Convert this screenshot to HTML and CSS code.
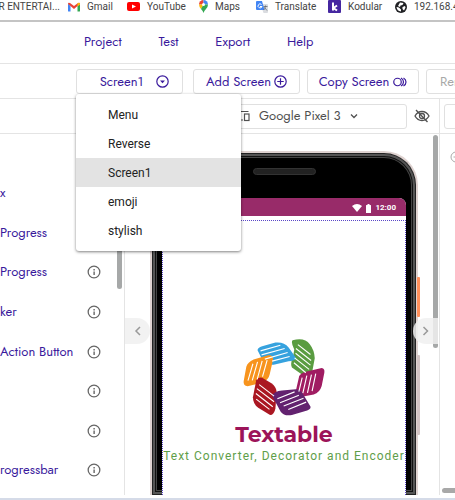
FILE: index.html
```html
<!DOCTYPE html>
<html lang="en">
<head>
    <meta charset="UTF-8">
    <meta name="viewport" content="width=device-width, initial-scale=1.0">
    <title>Kodular Creator</title>
    <link rel="stylesheet" href="styles.css">
</head>
<body>
    <!-- Shared symbols -->
    <svg class="defs" aria-hidden="true">
        <symbol id="info" viewBox="0 0 24 24">
            <circle cx="12" cy="12" r="10" fill="none" stroke="currentColor" stroke-width="2.2"/>
            <path d="M11 11h2.4v6H11zM11 7h2.4v2.4H11z" fill="currentColor"/>
        </symbol>
    </svg>

    <nav class="bookmarks" aria-label="Bookmarks">
        <a href="#">R ENTERTAI...</a>
        <a href="#">
            <svg width="12" height="10" viewBox="0 0 24 20"><path d="M0 3v15q0 1 1.500 1H5V8z" fill="#4285f4"/><path d="M24 3v15q0 1-1.500 1H19V8z" fill="#34a853"/><path d="M0 4Q0 0 4 2l8 6 8-6q4-2 4 2l-5 4-7 6-7-6z" fill="#ea4335"/><path d="M19 3l1-1q4-2 4 3l-5 4z" fill="#fbbc04"/></svg>
            Gmail
        </a>
        <a href="#">
            <svg width="13" height="9" viewBox="0 0 26 18"><rect width="26" height="18" rx="4" fill="#f00"/><path d="M10 5l8 4-8 4z" fill="#fff"/></svg>
            YouTube
        </a>
        <a href="#">
            <svg width="9" height="13" viewBox="0 0 18 26"><path d="M9 0a9 9 0 0 0-9 9h9z" fill="#ea4335"/><path d="M9 0a9 9 0 0 1 9 9H9z" fill="#4285f4"/><path d="M0 9h9l-5 9Q0 13 0 9z" fill="#fbbc04"/><path d="M18 9q0 5-4 9-4 4-5 8-1-4-5-8l5-9z" fill="#34a853"/><circle cx="9" cy="9" r="3" fill="#fff"/></svg>
            Maps
        </a>
        <a href="#">
            <svg width="12" height="12" viewBox="0 0 24 24"><path d="M9 6h13q2 0 2 2v14q0 2-2 2h-7z" fill="#dadce0"/><path d="M2 0h10l5 18H2q-2 0-2-2V2q0-2 2-2z" fill="#4285f4"/><path d="M11 7a4 4 0 1 0 1 4H8" fill="none" stroke="#fff" stroke-width="2"/><path d="M15 11h8M19 9v2q-1 5-4 7M17 13l5 6" fill="none" stroke="#5f6368" stroke-width="1.500"/></svg>
            Translate
        </a>
        <a href="#">
            <svg width="13" height="13" viewBox="0 0 26 26"><rect width="26" height="26" rx="2" fill="#4527a0"/><path d="M10 5v16M18 11l-7 5 7 5" fill="none" stroke="#fff" stroke-width="4"/></svg>
            Kodular
        </a>
        <a href="#">
            <svg width="12" height="12" viewBox="0 0 24 24"><circle cx="12" cy="12" r="12" fill="#202124"/><path d="M3 12q4 0 6 2t3 3v4q-8-1-9-9zM10 3l7 1-2 4-4 1-1 3-4-2zM15 12l5-2 1 3-3 6-3-3z" fill="#fff"/></svg>
            192.168.4
        </a>
    </nav>

    <nav class="main-nav" aria-label="Main">
        <a href="#">Project</a>
        <a href="#">Test</a>
        <a href="#">Export</a>
        <a href="#">Help</a>
    </nav>

    <div class="toolbar">
        <div class="screen-picker">
            <button type="button" class="btn" aria-haspopup="true" aria-expanded="true">
                Screen1
                <svg width="13" height="13" viewBox="0 0 24 24"><circle cx="12" cy="12" r="10.500" fill="none" stroke="currentColor" stroke-width="2.2"/><path d="M7.500 10h9L12 15z" fill="currentColor"/></svg>
            </button>
            <ul class="screen-menu">
                <li><button type="button">Menu</button></li>
                <li><button type="button">Reverse</button></li>
                <li><button type="button" class="active">Screen1</button></li>
                <li><button type="button">emoji</button></li>
                <li><button type="button">stylish</button></li>
            </ul>
        </div>
        <button type="button" class="btn add">
            Add Screen
            <svg width="13" height="13" viewBox="0 0 24 24" fill="none" stroke="currentColor" stroke-width="2.2"><circle cx="12" cy="12" r="10.500"/><path d="M12 6v12M6 12h12"/></svg>
        </button>
        <button type="button" class="btn copy">
            Copy Screen
            <svg width="14" height="12" viewBox="0 0 28 24" fill="none" stroke="currentColor" stroke-width="2.4"><circle cx="9" cy="12" r="7.500"/><path d="M16 4q5 3 5 8t-5 8M21 4q5 3 5 8t-5 8"/></svg>
        </button>
        <button type="button" class="btn remove" disabled>Remove</button>
    </div>

    <main class="designer">
        <aside class="palette">
            <div class="panel-head"></div>
            <ul class="components">
                <li></li>
                <li class="cut"><a href="#">ox</a></li>
                <li><a href="#">Progress</a></li>
                <li><a href="#">Progress</a><svg><use href="#info"/></svg></li>
                <li><a href="#">ker</a><svg><use href="#info"/></svg></li>
                <li><a href="#">Action Button</a><svg><use href="#info"/></svg></li>
                <li><svg><use href="#info"/></svg></li>
                <li><svg><use href="#info"/></svg></li>
                <li><a href="#">rogressbar</a><svg><use href="#info"/></svg></li>
            </ul>
            <div class="thumb"></div>
        </aside>

        <section class="viewer">
            <div class="panel-head">
                <div class="device">
                    <svg width="15" height="12" viewBox="0 0 30 24" fill="none" stroke="currentColor" stroke-width="2.4"><path d="M27 3H5v15M1 20h15"/><rect x="19" y="8" width="9" height="13"/></svg>
                    <select aria-label="Device">
                        <option>Google Pixel 3</option>
                    </select>
                    <svg width="8" height="6" viewBox="0 0 16 12" fill="none" stroke="currentColor" stroke-width="2.600"><path d="M2 3l6 6 6-6"/></svg>
                </div>
                <button type="button" class="eye" aria-label="Show hidden components">
                    <svg width="16" height="14" viewBox="0 0 32 28" fill="none" stroke="currentColor" stroke-width="2.600"><path d="M2 14Q7 5 16 5t14 9q-5 9-14 9T2 14z"/><circle cx="16" cy="14" r="5"/><path d="M4 2l23 24"/></svg>
                </button>
            </div>
            <div class="workspace">
                <div class="phone">
                    <div class="speaker"></div>
                    <div class="screen">
                        <div class="status">
                            <svg width="10" height="8" viewBox="0 0 20 16"><path d="M0 4Q10-4 20 4L10 16z" fill="#fff"/></svg>
                            <svg width="5" height="9" viewBox="0 0 10 18"><path d="M3 0h4v2h2q1 0 1 1v14q0 1-1 1H1q-1 0-1-1V3q0-1 1-1h2z" fill="#fff"/></svg>
                            <span>12:00</span>
                        </div>
                        <div class="form">
                            <svg class="logo" width="82" height="78" viewBox="52 38 248 234">
                                <path d="M202 44Q238 34 254 56Q268 74 269 98L262 136Q256 156 240 154L200 126Q194 114 203 96L207 72Q196 50 202 44Z" fill="#5a9c41"/>
                                <path d="M96 74Q96 66 110 62L150 51Q176 48 190 66L213 98Q208 106 190 107L145 118Q120 120 112 106Z" fill="#36a2de"/>
                                <path d="M222 152Q228 142 245 138L290 128Q300 130 298 142L290 182Q284 202 266 208L222 216Q206 212 212 196Z" fill="#a01c62"/>
                                <path d="M62 124Q66 110 84 102L128 89Q144 88 143 102L133 146Q130 162 112 172L66 183Q52 182 54 168Z" fill="#f7941e"/>
                                <path d="M92 165Q98 154 110 157L138 174Q152 184 154 200L150 250Q146 270 134 270L98 248Q82 236 82 216Z" fill="#aa1722"/>
                                <path d="M140 212Q146 198 170 196L212 192Q224 192 232 204L256 244Q258 252 246 256L200 270Q176 274 166 260Z" fill="#63226f"/>
                                <g fill="none" stroke="#fff" stroke-width="3.400">
                                    <path d="M105 76L165 59M108 88L178 69M118 101L187 81M140 107L193 93"/>
                                    <path d="M218 57L256 87M212 69L258 105M211 83L256 119M208 97L252 132M206 112L242 142"/>
                                    <path d="M231 157L221 199M245 151L233 204M259 148L247 203M272 145L261 198"/>
                                    <path d="M82 115L67 166M96 109L80 165M110 106L95 162M125 104L111 154"/>
                                    <path d="M101 178L146 213M94 190L146 230M91 205L142 245M92 222L132 253"/>
                                    <path d="M156 221L208 200M164 233L221 210M175 243L235 219M189 253L243 231"/>
                                </g>
                            </svg>
                            <h1>Textable</h1>
                            <p>Text Converter, Decorator and Encoder</p>
                        </div>
                    </div>
                    <i class="key power"></i>
                    <i class="key volume"></i>
                </div>
                <div class="thumb"></div>
                <button type="button" class="handle left" aria-label="Collapse palette"><svg width="7" height="10" viewBox="0 0 14 20"><path d="M12 2L4 10l8 8"/></svg></button>
                <button type="button" class="handle right" aria-label="Collapse components"><svg width="7" height="10" viewBox="0 0 14 20"><path d="M3 2l8 8-8 8"/></svg></button>
            </div>
        </section>

        <aside class="tree">
            <div class="panel-head"><div class="tree-box"></div></div>
            <svg class="collapse" width="12" height="12" viewBox="0 0 24 24" fill="none" stroke="currentColor" stroke-width="2"><circle cx="12" cy="12" r="10"/><path d="M7 12h10"/></svg>
            <div class="tree-scroll"></div>
        </aside>
    </main>
    <footer class="bottom"></footer>
</body>
</html>
```

FILE: styles.css
```css
* {
    margin: 0;
    padding: 0;
    box-sizing: border-box;
}

body {
    display: flex;
    flex-direction: column;
    height: 100vh;
    overflow: hidden;
    background: #fff;
    color: #3a1a9c;
    font-family: Jost, Lato, sans-serif;
    font-size: 13px;
    line-height: 18px;
}

a {
    color: inherit;
    text-decoration: none;
    white-space: nowrap;
}

ul {
    list-style: none;
}

button,
select {
    font: inherit;
    color: inherit;
    background: none;
    border: none;
    cursor: pointer;
}

svg {
    flex: none;
}

.defs {
    position: absolute;
    width: 0;
    height: 0;
}

/* Browser bookmarks */
.bookmarks {
    display: grid;
    grid-template-columns: 68px 59px 72px 57px 72px 67px 60px;
    height: 22px;
    padding-bottom: 10px;
    border-bottom: 2px solid #c4c4c4;
    color: #444;
    font-family: "Segoe UI", Roboto, sans-serif;
    font-size: 10px;
    line-height: 12px;
    overflow: hidden;
}

.bookmarks a {
    display: flex;
    align-items: center;
    gap: 7px;
}

.bookmarks a:first-child {
    justify-content: flex-end;
    padding-right: 8px;
}

/* Main menu */
.main-nav {
    display: flex;
    gap: 37px;
    height: 42px;
    padding: 11px 84px;
    border-bottom: 1px solid #e4e4e4;
}

/* Screen buttons */
.toolbar {
    display: flex;
    gap: 7px;
    height: 35px;
    padding: 5px 0 5px 76px;
    border-bottom: 1px solid #e4e4e4;
}

.btn {
    display: flex;
    flex: none;
    align-items: center;
    justify-content: center;
    gap: 4px;
    width: 107px;
    height: 25px;
    border: 1px solid #e0e0e0;
    border-radius: 3px;
    white-space: nowrap;
}

.screen-picker {
    position: relative;
    margin-right: 3px;
}

.screen-picker .btn {
    gap: 13px;
    padding-left: 10px;
}

.add {
    gap: 3px;
}

.copy {
    width: 112px;
}

.remove {
    justify-content: flex-start;
    padding-left: 13px;
    color: #a8a8a8;
}

.screen-menu {
    position: absolute;
    top: 25px;
    left: 0;
    z-index: 5;
    width: 165px;
    padding: 6px 0;
    background: #fff;
    border-radius: 3px;
    box-shadow: 0 1px 3px rgba(0, 0, 0, 0.5);
}

.screen-menu button {
    display: block;
    width: 100%;
    height: 29px;
    padding-left: 32px;
    color: #222;
    font-family: Roboto, sans-serif;
    font-size: 12px;
    text-align: left;
}

.screen-menu .active {
    background: #e3e3e3;
}

/* Designer */
.designer {
    display: flex;
    flex: 1;
    min-height: 0;
}

.panel-head {
    display: flex;
    flex: none;
    align-items: center;
    justify-content: flex-end;
    height: 35px;
    border-bottom: 1px solid #e4e4e4;
}

.palette {
    position: relative;
    display: flex;
    flex-direction: column;
    width: 125px;
    border-right: 1px solid #e4e4e4;
}

.components {
    display: flex;
    flex: 1;
    flex-direction: column;
    padding-bottom: 5px;
}

.components li {
    display: flex;
    flex: 1;
    align-items: center;
    padding-right: 23px;
}

.components .cut {
    text-indent: -7px;
}

.components svg {
    width: 14px;
    height: 14px;
    margin-left: auto;
    color: #666;
}

.thumb {
    position: absolute;
    width: 5px;
    background: #a6a8a8;
    border-radius: 3px;
}

.palette .thumb {
    top: 36px;
    right: 2px;
    height: 154px;
}

.viewer {
    display: flex;
    flex: 1;
    flex-direction: column;
    min-width: 0;
    border-right: 1px solid #e4e4e4;
}

.viewer .panel-head {
    gap: 7px;
    padding-right: 9px;
    color: #505050;
}

.device {
    display: flex;
    align-items: center;
    gap: 9px;
    width: 182px;
    height: 25px;
    padding-left: 9px;
    border: 1px solid #e0e0e0;
    border-radius: 3px;
}

.device select {
    appearance: none;
    outline: none;
}

.eye {
    display: flex;
}

.workspace {
    position: relative;
    flex: 1;
    min-height: 0;
    padding: 17px 21px 0 25px;
    overflow: hidden;
}

.phone {
    position: relative;
    display: flex;
    flex-direction: column;
    height: 100%;
    padding: 15px 10px 0;
    background: #000;
    border: 2px solid #dfd3d1;
    border-bottom: none;
    border-radius: 34px 34px 0 0;
    box-shadow: inset 0 0 0 1px #222, inset 0 0 0 3px #555, inset 0 0 0 4px #111, inset 0 0 0 5px #444;
}

.speaker {
    align-self: center;
    width: 63px;
    height: 7px;
    margin-bottom: 23px;
    background: #222;
    border: 1px solid #333;
    border-radius: 4px;
}

.screen {
    display: flex;
    flex: 1;
    flex-direction: column;
    min-height: 0;
    background: #fff;
    border-radius: 7px 7px 0 0;
    overflow: hidden;
}

.status {
    display: flex;
    flex: none;
    align-items: center;
    justify-content: flex-end;
    gap: 4px;
    height: 18px;
    margin-bottom: 4px;
    padding: 2px 10px 0 0;
    background: #982b69;
    color: #fff;
    font-family: Roboto, sans-serif;
    font-size: 8px;
    font-weight: bold;
}

.form {
    display: flex;
    flex: 1;
    flex-direction: column;
    align-items: center;
    padding-top: 117px;
    border: 1px dotted #5b48c8;
    border-bottom: none;
}

.logo {
    margin-bottom: 5px;
}

.form h1 {
    color: #9c1459;
    font-family: Montserrat, Inter, sans-serif;
    font-size: 22px;
    line-height: 28px;
}

.form p {
    color: #5f9e4a;
    font-family: Roboto, sans-serif;
    font-size: 12px;
    line-height: 14px;
    letter-spacing: 1px;
    white-space: nowrap;
}

/* Hardware keys on the phone's right side */
.key {
    position: absolute;
    right: -4px;
    width: 3px;
    border-radius: 1px;
}

.power {
    top: 124px;
    height: 40px;
    background: #ff8f5a;
}

.volume {
    top: 202px;
    height: 80px;
    background: #d3c4c4;
}

.workspace .thumb {
    top: 1px;
    right: 1px;
    height: 213px;
}

.handle {
    position: absolute;
    top: 184px;
    display: flex;
    align-items: center;
    justify-content: center;
    width: 25px;
    height: 26px;
    background: rgba(240, 240, 240, 0.85);
}

.handle.left {
    left: 0;
    border-radius: 0 13px 13px 0;
}

.handle.right {
    right: 1px;
    border-radius: 13px 0 0 13px;
}

.handle path {
    fill: none;
    stroke: #999;
    stroke-width: 3;
}

.tree {
    display: flex;
    flex-direction: column;
    width: 15px;
    overflow: hidden;
}

.tree .panel-head {
    justify-content: flex-start;
    padding-left: 4px;
}

.tree-box {
    flex: none;
    width: 120px;
    height: 25px;
    border: 1px solid #e0e0e0;
    border-radius: 3px;
}

.collapse {
    margin: 17px 0 0 10px;
    color: #aaa;
}

.tree-scroll {
    width: 60px;
    height: 5px;
    margin: auto 0 2px 2px;
    background: #a8a8a8;
    border-radius: 3px;
}

.bottom {
    height: 5px;
    border-bottom: 2px solid #d5dbe8;
}
```
